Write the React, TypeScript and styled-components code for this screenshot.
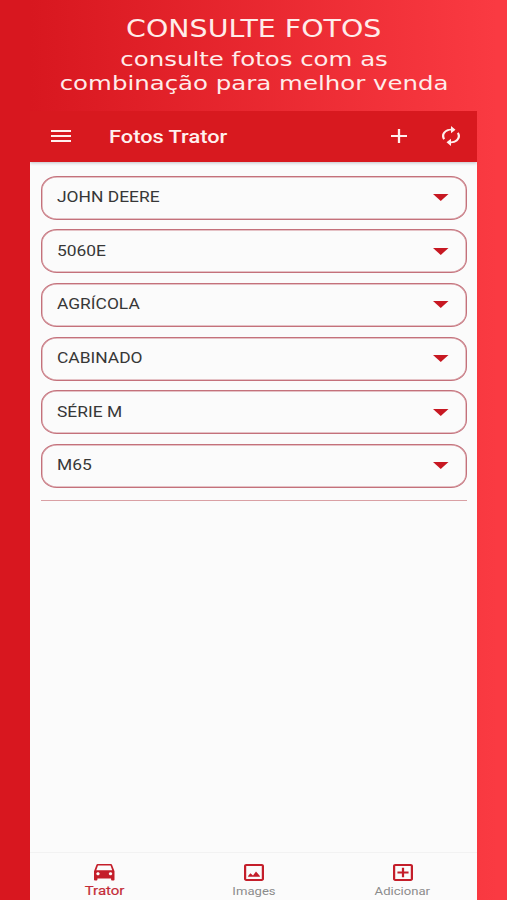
import React from 'react';
import styled, { createGlobalStyle } from 'styled-components';

const GlobalStyle = createGlobalStyle`
  * { box-sizing: border-box; }
  html, body { margin: 0; padding: 0; }
`;

const Page = styled.main`
  width: 507px;
  height: 900px;
  overflow: hidden;
  display: flex;
  flex-direction: column;
  background: linear-gradient(90deg, #d8171f 6%, #fa3a42 98%);
`;

const Promo = styled.header`
  height: 111px;
  flex: none;
  padding: 15px 0 0 1px;
  display: flex;
  flex-direction: column;
  align-items: center;
  color: #ffecea;
  font-family: 'DejaVu Sans', sans-serif;
  white-space: nowrap;
`;

const PromoTitle = styled.h1`
  margin: 0;
  font-size: 24px;
  line-height: 28px;
  font-weight: 400;
  transform: scaleX(1.185);
`;

const PromoText = styled.p`
  margin: 4px 0 0;
  font-size: 20px;
  line-height: 24px;
  text-align: center;
  transform: scaleX(1.222);
`;

const Screen = styled.section`
  width: 447px;
  margin-left: 30px;
  flex: 1;
  display: flex;
  flex-direction: column;
  background: #fbfbfb;
  font-family: Roboto, sans-serif;
  overflow: hidden;
`;

const AppBar = styled.div`
  height: 50.5px;
  flex: none;
  display: flex;
  align-items: center;
  padding: 0 17px 0 20.5px;
  background: #d8191f;
  color: #fff0ee;
  box-shadow: 0 1px 3px rgba(60, 60, 80, 0.3);
`;

const AppTitle = styled.h2`
  flex: 1;
  margin: 1px 0 0 37.5px;
  font-size: 18px;
  line-height: 24px;
  font-weight: 500;
  transform: scaleX(1.21);
  transform-origin: left;
`;

const AppAction = styled.button<{ $gap?: number }>`
  display: flex;
  padding: 0;
  border: 0;
  background: none;
  color: inherit;
  margin-left: ${(p) => p.$gap ?? 0}px;
`;

const Glyph = styled.svg`
  display: block;
  fill: currentColor;
`;

const Filters = styled.div`
  flex: 1;
  display: flex;
  flex-direction: column;
  gap: 9.7px;
  padding: 14px 10.5px 0;
`;

const Field = styled.div`
  height: 44px;
  display: flex;
  align-items: center;
  justify-content: space-between;
  padding: 0 17px 0 15.5px;
  border: 1px solid #c4717b;
  box-shadow: inset 0 0 0 0.5px #cf8a91;
  border-radius: 16px / 14px;
  color: #c71822;
`;

const FieldValue = styled.span`
  color: #373737;
  font-size: 15px;
  line-height: 20px;
  padding-bottom: 1.2px;
  transform: scaleX(1.16);
  transform-origin: left;
`;

const Divider = styled.hr`
  width: 100%;
  height: 1px;
  margin: 2px 0 0;
  border: 0;
  background: #d9a0a4;
`;

const Tabs = styled.nav`
  height: 48px;
  flex: none;
  display: grid;
  grid-template-columns: repeat(3, 1fr);
  border-top: 1px solid #f2f2f2;
`;

const Tab = styled.div`
  display: flex;
  flex-direction: column;
  align-items: center;
  padding-top: 11px;
  color: #c41e2a;
`;

const TabLabel = styled.span<{ $active?: boolean }>`
  margin-top: 2px;
  font-size: ${(p) => (p.$active ? 12.5 : 11.5)}px;
  line-height: 16px;
  color: ${(p) => (p.$active ? '#c42c38' : '#8b8b8b')};
  -webkit-text-stroke: ${(p) => (p.$active ? 0.2 : 0)}px currentColor;
  transform: scaleX(${(p) => (p.$active ? 1.2 : 1.14)});
`;

type IconProps = { w: number; h: number; box: string; d: string };
const Icon = ({ w, h, box, d }: IconProps) => (
  <Glyph width={w} height={h} viewBox={box} preserveAspectRatio="none" aria-hidden="true">
    <path d={d} fillRule="evenodd" />
  </Glyph>
);

const menuPath = 'M3 18h18v-2H3v2zm0-5h18v-2H3v2zm0-7v2h18V6H3z';
const plusPath = 'M19 13h-6v6h-2v-6H5v-2h6V5h2v6h6z';
const renewPath =
  'M12 6v3l4-4-4-4v3c-4.42 0-8 3.58-8 8 0 1.57.46 3.03 1.24 4.26L6.7 14.8c-.45-.83-.7-1.79-.7-2.8 0-3.31 2.69-6 6-6zm6.76 1.74L17.3 9.2c.44.84.7 1.79.7 2.8 0 3.31-2.69 6-6 6v-3l-4 4 4 4v-3c4.42 0 8-3.58 8-8 0-1.57-.46-3.03-1.24-4.26z';
const carPath =
  'M18.92 6.01C18.72 5.42 18.16 5 17.5 5h-11c-.66 0-1.21.42-1.42 1.01L3 12v8c0 .55.45 1 1 1h1c.55 0 1-.45 1-1v-1h12v1c0 .55.45 1 1 1h1c.55 0 1-.45 1-1v-8l-2.08-5.99zM6.5 16c-.83 0-1.5-.67-1.5-1.5S5.67 13 6.5 13s1.5.67 1.5 1.5S7.33 16 6.5 16zm11 0c-.83 0-1.5-.67-1.5-1.5s.67-1.5 1.5-1.5 1.5.67 1.5 1.5-.67 1.5-1.5 1.5zM5 11l1.5-4.5h11L19 11H5z';
const framePath =
  'M5 3h14c1.1 0 2 .9 2 2v14c0 1.1-.9 2-2 2H5c-1.1 0-2-.9-2-2V5c0-1.1.9-2 2-2zM5 5v14h14V5z';
const imagePath = framePath + 'M6.7 16.6v-.8l2.1-3 2.3 2.3 2.7-4.1 3.5 4.8v.8z';
const addBoxPath = framePath + 'M11 7h2v4h4v2h-4v4h-2v-4H7v-2h4z';

const values = ['JOHN DEERE', '5060E', 'AGRÍCOLA', 'CABINADO', 'SÉRIE M', 'M65'];

const tabs = [
  { label: 'Trator', active: true, w: 20.5, h: 16.5, box: '3 5 18 16', d: carPath },
  { label: 'Images', active: false, w: 20, h: 17, box: '3 3 18 18', d: imagePath },
  { label: 'Adicionar', active: false, w: 20, h: 17, box: '3 3 18 18', d: addBoxPath },
];

export default function App() {
  return (
    <Page>
      <GlobalStyle />
      <Promo>
        <PromoTitle>CONSULTE FOTOS</PromoTitle>
        <PromoText>
          consulte fotos com as
          <br />
          combinação para melhor venda
        </PromoText>
      </Promo>
      <Screen>
        <AppBar>
          <AppAction aria-label="Menu">
            <Icon w={20.5} h={12} box="3 6 18 12" d={menuPath} />
          </AppAction>
          <AppTitle>Fotos Trator</AppTitle>
          <AppAction aria-label="Adicionar">
            <Icon w={16} h={14} box="5 5 14 14" d={plusPath} />
          </AppAction>
          <AppAction aria-label="Atualizar" $gap={35}>
            <Icon w={18} h={20} box="4 1 16 22" d={renewPath} />
          </AppAction>
        </AppBar>
        <Filters>
          {values.map((value) => (
            <Field key={value}>
              <FieldValue>{value}</FieldValue>
              <Icon w={15.5} h={7} box="0 0 16 7" d="M0 0h16L8 7z" />
            </Field>
          ))}
          <Divider />
        </Filters>
        <Tabs>
          {tabs.map((t) => (
            <Tab key={t.label}>
              <Icon w={t.w} h={t.h} box={t.box} d={t.d} />
              <TabLabel $active={t.active}>{t.label}</TabLabel>
            </Tab>
          ))}
        </Tabs>
      </Screen>
    </Page>
  );
}
